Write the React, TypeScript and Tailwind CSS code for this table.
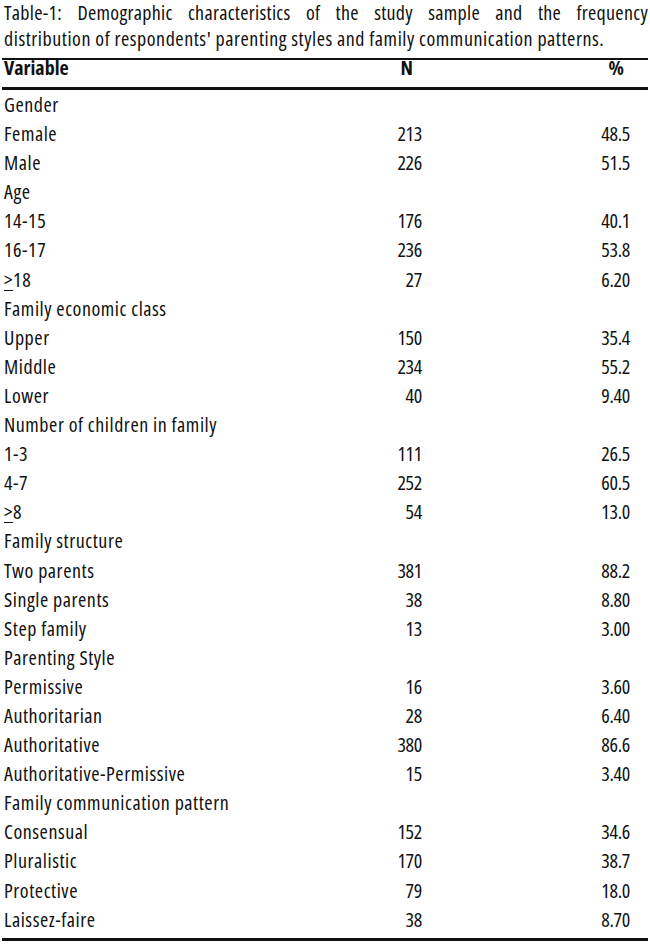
import React from "react";

type Row = { label: React.ReactNode; n?: string; p?: string };

const ge = (v: string) => (
  <span>
    <span className="underline decoration-1 underline-offset-[3px]">&gt;</span>
    {v}
  </span>
);

const rows: Row[] = [
  { label: "Gender" },
  { label: "Female", n: "213", p: "48.5" },
  { label: "Male", n: "226", p: "51.5" },
  { label: "Age" },
  { label: "14-15", n: "176", p: "40.1" },
  { label: "16-17", n: "236", p: "53.8" },
  { label: ge("18"), n: "27", p: "6.20" },
  { label: "Family economic class" },
  { label: "Upper", n: "150", p: "35.4" },
  { label: "Middle", n: "234", p: "55.2" },
  { label: "Lower", n: "40", p: "9.40" },
  { label: "Number of children in family" },
  { label: "1-3", n: "111", p: "26.5" },
  { label: "4-7", n: "252", p: "60.5" },
  { label: ge("8"), n: "54", p: "13.0" },
  { label: "Family structure" },
  { label: "Two parents", n: "381", p: "88.2" },
  { label: "Single parents", n: "38", p: "8.80" },
  { label: "Step family", n: "13", p: "3.00" },
  { label: "Parenting Style" },
  { label: "Permissive", n: "16", p: "3.60" },
  { label: "Authoritarian", n: "28", p: "6.40" },
  { label: "Authoritative", n: "380", p: "86.6" },
  { label: "Authoritative-Permissive", n: "15", p: "3.40" },
  { label: "Family communication pattern" },
  { label: "Consensual", n: "152", p: "34.6" },
  { label: "Pluralistic", n: "170", p: "38.7" },
  { label: "Protective", n: "79", p: "18.0" },
  { label: "Laissez-faire", n: "38", p: "8.70" },
];

export default function App() {
  return (
    <div className="w-[650px] h-[950px] bg-white text-[#111] font-['Open_Sans',sans-serif] font-stretch-condensed px-[2px] overflow-hidden">
      <div className="text-[20px] leading-[26px] pl-[2px]">
        <div className="text-justify [text-align-last:justify] tracking-[0.3px]">
          Table-1: Demographic characteristics of the study sample and the frequency
        </div>
        <div className="whitespace-nowrap tracking-[0.55px]">
          distribution of respondents' parenting styles and family communication patterns.
        </div>
      </div>
      <div className="mt-[6px] border-t-2 border-[#111]" />
      <div className="flex items-start h-[27px] leading-[16px] text-[20px] font-bold pr-[18px] pl-[2px]">
        <div className="flex-1">Variable</div>
        <div className="w-[92px] text-right pr-[9px]">N</div>
        <div className="w-[208px] text-right pr-[6px]">%</div>
      </div>
      <div className="border-t-[3px] border-[#111]" />
      <div className="pb-[4px]">
        {rows.map((r, i) => (
          <div key={i} className="flex h-[29.1px] leading-[29.1px] text-[20px] pr-[18px] pl-[2px]">
            <div className="flex-1 tracking-[0.55px] whitespace-nowrap">{r.label}</div>
            <div className="w-[92px] text-right tracking-[-0.3px]">{r.n ?? ""}</div>
            <div className="w-[208px] text-right tracking-[-0.3px]">{r.p ?? ""}</div>
          </div>
        ))}
      </div>
      <div className="border-t-[3px] border-[#111]" />
    </div>
  );
}
